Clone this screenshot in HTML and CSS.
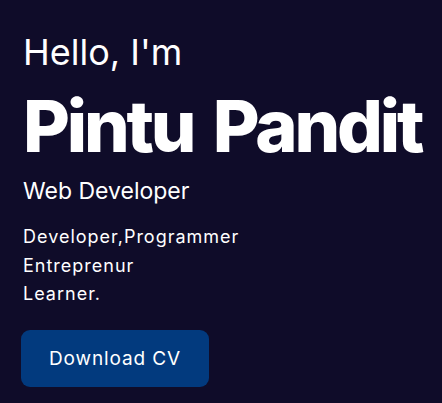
FILE: index.html
```html
<!DOCTYPE html>
<html lang="en">
<head>
<meta charset="utf-8">
<title>Pintu Pandit</title>
<link rel="stylesheet" href="styles.css">
</head>
<body>
<section class="hero">
  <h3 class="hello">Hello, I'm</h3>
  <h1 class="name">Pintu Pandit</h1>
  <h2 class="role">Web Developer</h2>
  <p class="tags">Developer,Programmer<br>Entreprenur<br>Learner.</p>
  <a class="btn" href="#">Download CV</a>
</section>
</body>
</html>
```
FILE: styles.css
```css
html, body {
  margin: 0;
  padding: 0;
  background: #0f0c29;
  height: 100%;
}
body {
  font-family: Inter, "Open Sans", sans-serif;
  color: #ffffff;
}
.hero {
  display: flex;
  flex-direction: column;
  align-items: flex-start;
  padding: 31px 23px 0 23px;
}
.hello {
  margin: 0;
  font-size: 36px;
  font-weight: 400;
  line-height: 43px;
}
.name {
  margin: 12px 0 0 0;
  font-size: 72px;
  font-weight: 800;
  line-height: 79px;
  letter-spacing: -3.2px;
  word-spacing: 7px;
  white-space: nowrap;
}
.role {
  margin: 11px 0 0 0;
  font-size: 23px;
  font-weight: 400;
  line-height: 30px;
}
.tags {
  margin: 17px 0 0 0;
  font-size: 18px;
  line-height: 28.5px;
  letter-spacing: 1px;
}
.btn {
  margin: 21px 0 0 -2px;
  display: inline-flex;
  align-items: center;
  justify-content: center;
  width: 188px;
  height: 57px;
  box-sizing: border-box;
  background: #023a7e;
  border-radius: 9px;
  color: #ffffff;
  text-decoration: none;
  font-size: 19px;
  letter-spacing: 0.9px;
}
```
